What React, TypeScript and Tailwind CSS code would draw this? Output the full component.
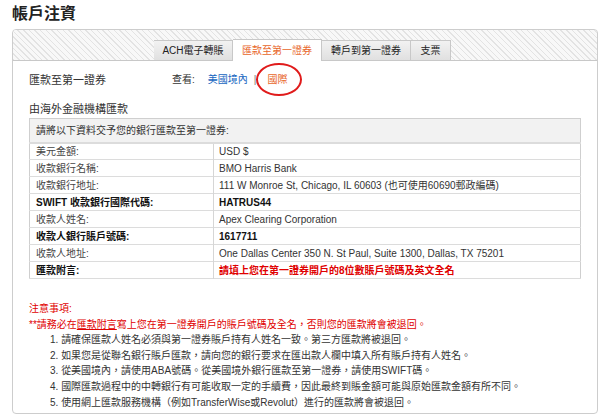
const rows: { label: string; value: string; bold?: boolean; red?: boolean }[] = [
  { label: "美元金額:", value: "USD $" },
  { label: "收款銀行名稱:", value: "BMO Harris Bank" },
  { label: "收款銀行地址:", value: "111 W Monroe St, Chicago, IL 60603 (也可使用60690郵政編碼)" },
  { label: "SWIFT 收款銀行國際代碼:", value: "HATRUS44", bold: true },
  { label: "收款人姓名:", value: "Apex Clearing Corporation" },
  { label: "收款人銀行賬戶號碼:", value: "1617711", bold: true },
  { label: "收款人地址:", value: "One Dallas Center 350 N. St Paul, Suite 1300, Dallas, TX 75201" },
  { label: "匯款附言:", value: "請填上您在第一證券開戶的8位數賬戶號碼及英文全名", bold: true, red: true },
];

const notes = [
  "請確保匯款人姓名必須與第一證券賬戶持有人姓名一致。第三方匯款將被退回。",
  "如果您是從聯名銀行賬戶匯款，請向您的銀行要求在匯出款人欄中填入所有賬戶持有人姓名。",
  "從美國境內，請使用ABA號碼。從美國境外銀行匯款至第一證券，請使用SWIFT碼。",
  "國際匯款過程中的中轉銀行有可能收取一定的手續費，因此最終到賬金額可能與原始匯款金額有所不同。",
  "使用網上匯款服務機構（例如TransferWise或Revolut）進行的匯款將會被退回。",
];

const tabBase =
  "h-[21px] flex items-center justify-center text-[10px] border border-[#c8c8c8] border-l-0 text-[#222] bg-[linear-gradient(#f2f2f2,#e0e0e0)]";

export default function App() {
  return (
    <div className="w-[600px] h-[419px] bg-white overflow-hidden text-[#333] font-['Liberation_Sans','Noto_Sans_CJK_TC',sans-serif]">
      {/* 標題 */}
      <h1 className="pl-[12px] pt-[4px] h-[29px] text-[16px] leading-[20px] font-bold text-[#222]">
        帳戶注資
      </h1>

      {/* 外框 */}
      <div className="ml-[12px] w-[586px] h-[385px] border border-[#cdcdcd] rounded-[4px] overflow-hidden">
        {/* 分頁列 */}
        <div className="h-[31px] flex items-end pl-[141px] border-b border-[#c8c8c8] bg-[repeating-linear-gradient(45deg,#e3e3e3_0px,#e3e3e3_1px,#f8f8f8_1px,#f8f8f8_4px)]">
          <div className={`${tabBase} w-[79px] border-l -mb-px`}>ACH電子轉賬</div>
          <div className="h-[22px] w-[89px] -mb-px flex items-center justify-center text-[10px] bg-white border-t border-r border-[#c8c8c8] text-[#e8662a]">
            匯款至第一證券
          </div>
          <div className={`${tabBase} w-[89px] -mb-px`}>轉戶到第一證券</div>
          <div className={`${tabBase} w-[40px] -mb-px`}>支票</div>
        </div>

        <div className="pl-[16px] pr-[16px]">
          {/* 查看 */}
          <div className="h-[37px] pt-[12px] flex items-start text-[11px] leading-[14px]">
            <span className="w-[143px]">匯款至第一證券</span>
            <span className="text-[#333] text-[10px]">查看:</span>
            <span className="ml-[13px] text-[10px] text-[#1565c0]">美國境內</span>
            <span className="ml-[6px] text-[10px] text-[#777]">|</span>
            <span className="relative ml-[11px] text-[10px] text-[#e8662a]">
              國際
              <span className="absolute left-[-11px] top-[-10px] w-[46px] h-[33px] rounded-[50%] border-2 border-[#e01b1b]" />
            </span>
          </div>

          <div className="text-[11px] leading-[14px] h-[20px] pt-[4px]">由海外金融機構匯款</div>

          {/* 資料表 */}
          <table className="w-[552px] border-collapse border border-[#cfcfcf] text-[10px]">
            <tbody>
              <tr className="bg-[#f2f2f2] border-b-2 border-[#dcdcdc]">
                <td colSpan={2} className="h-[24px] px-[6px] text-[#333]">
                  請將以下資料交予您的銀行匯款至第一證券:
                </td>
              </tr>
              {rows.map((r) => (
                <tr key={r.label} className="border-b border-[#dcdcdc]">
                  <td
                    className={`h-[17px] w-[184px] px-[6px] border-r border-[#d6d6d6] ${
                      r.bold ? "font-bold text-[#111]" : "text-[#444]"
                    }`}
                  >
                    {r.label}
                  </td>
                  <td
                    className={`px-[5px] ${r.bold ? "font-bold" : ""} ${
                      r.red ? "text-[#e00000]" : r.bold ? "text-[#111]" : "text-[#333]"
                    }`}
                  >
                    {r.value}
                  </td>
                </tr>
              ))}
            </tbody>
          </table>

          {/* 注意事項 */}
          <div className="mt-[22px] text-[10px] leading-[15.6px]">
            <div className="text-[#e00000]">注意事項:</div>
            <div className="text-[#e00000]">
              **請務必在<span className="underline">匯款附言</span>寫上您在第一證券開戶的賬戶號碼及全名，否則您的匯款將會被退回。
            </div>
            <ol className="pl-[21px] text-[#333]">
              {notes.map((n, i) => (
                <li key={i}>
                  {i + 1}. {n}
                </li>
              ))}
            </ol>
          </div>
        </div>
      </div>
    </div>
  );
}
